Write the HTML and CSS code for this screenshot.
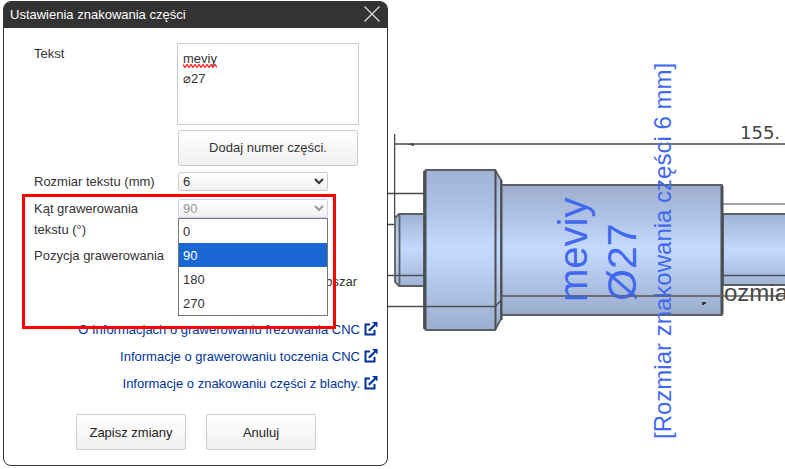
FILE: index.html
```html
<!DOCTYPE html>
<html lang="pl">
<head>
<meta charset="utf-8">
<title>Ustawienia znakowania części</title>
<link rel="stylesheet" href="styles.css">
</head>
<body>
<svg class="sprite" aria-hidden="true">
  <symbol id="external" viewBox="0 0 14 14">
    <path d="M6 2.500H1.500v10h9V8" fill="none" stroke="currentColor" stroke-width="2"/>
    <path d="M4.800 8.800 11 2.800" fill="none" stroke="currentColor" stroke-width="2.200"/>
    <path d="M8 0h5.500v5.500z" fill="currentColor"/>
  </symbol>
</svg>
<main class="workspace">
  <section class="dialog" role="dialog" aria-labelledby="dialog-title">
    <header class="dialog-header">
      <h1 class="dialog-title" id="dialog-title">Ustawienia znakowania części</h1>
      <button class="close" type="button" aria-label="Zamknij">
        <svg width="16" height="16" viewBox="0 0 16 16"><path d="M0.500 0.500l15 15M15.500 0.500l-15 15" stroke="#ddd" stroke-width="1.300"/></svg>
      </button>
    </header>
    <form class="form">
      <div class="row">
        <label class="label" for="text">Tekst</label>
        <div class="field text-field">
          <textarea class="textarea" id="text" spellcheck="false">meviy
⌀27</textarea>
          <svg class="squiggle" width="34" height="4" viewBox="0 0 34 4" aria-hidden="true"><path d="M0 .5l2 3 2-3 2 3 2-3 2 3 2-3 2 3 2-3 2 3 2-3 2 3 2-3 2 3 2-3 2 3 2-3 2 3" fill="none" stroke="#f22" stroke-width="1.300"/></svg>
          <button class="button add" type="button">Dodaj numer części.</button>
        </div>
      </div>
      <div class="row setting">
        <label class="label" for="size">Rozmiar tekstu (mm)</label>
        <div class="field"><select class="select" id="size"><option>6</option></select></div>
      </div>
      <div class="row setting">
        <label class="label" for="angle">Kąt grawerowania tekstu (°)</label>
        <div class="field">
          <select class="select open" id="angle"><option>90</option></select>
          <ul class="menu" role="listbox" aria-label="Kąt grawerowania">
            <li class="option" role="option">0</li>
            <li class="option selected" role="option" aria-selected="true">90</li>
            <li class="option" role="option">180</li>
            <li class="option" role="option">270</li>
          </ul>
        </div>
      </div>
      <div class="row setting position-row">
        <span class="label">Pozycja grawerowania</span>
        <div class="field area">obszar</div>
      </div>
      <nav class="links">
        <a class="link" href="#">O Informacjach o grawerowaniu frezowania CNC <svg class="icon"><use href="#external"/></svg></a>
        <a class="link" href="#">Informacje o grawerowaniu toczenia CNC <svg class="icon"><use href="#external"/></svg></a>
        <a class="link" href="#">Informacje o znakowaniu części z blachy. <svg class="icon"><use href="#external"/></svg></a>
      </nav>
      <div class="actions">
        <button class="button" type="button">Zapisz zmiany</button>
        <button class="button" type="button">Anuluj</button>
      </div>
    </form>
    <div class="highlight"></div>
  </section>
  <section class="viewport">
    <svg class="drawing" width="398" height="469" viewBox="388 0 398 469" role="img" aria-label="Rysunek wałka">
      <defs>
        <linearGradient id="metal" gradientUnits="userSpaceOnUse" x1="0" y1="170" x2="0" y2="330">
          <stop offset="0" stop-color="#a0b2d5"/><stop offset=".25" stop-color="#afc3e6"/>
          <stop offset=".48" stop-color="#c4d9fe"/><stop offset=".55" stop-color="#c1d6fb"/>
          <stop offset=".75" stop-color="#afc3e5"/><stop offset="1" stop-color="#9dafd1"/>
        </linearGradient>
        <linearGradient id="shaft" gradientUnits="userSpaceOnUse" x1="0" y1="185" x2="0" y2="315">
          <stop offset="0" stop-color="#9dadcd"/><stop offset=".25" stop-color="#afc3e6"/>
          <stop offset=".48" stop-color="#c4d9fe"/><stop offset=".55" stop-color="#c1d6fb"/>
          <stop offset=".75" stop-color="#afc3e5"/><stop offset="1" stop-color="#9aaccc"/>
        </linearGradient>
        <linearGradient id="journal" gradientUnits="userSpaceOnUse" x1="0" y1="214" x2="0" y2="286">
          <stop offset="0" stop-color="#a0b3d6"/><stop offset=".5" stop-color="#c4d9fe"/><stop offset="1" stop-color="#a0b3d6"/>
        </linearGradient>
      </defs>
      <g fill="none" stroke="#484848">
        <path d="M395.500 134v84" stroke="#ccc"/>
        <path d="M394.500 134v84"/>
        <path d="M395 144h391" stroke-width="1.600"/>
        <path d="M388 193.500h37M388 224.500h7" stroke-width="1.300"/>
        <path d="M723 204h63" stroke="#888" stroke-width="1.500"/>
      </g>
      <path d="M408 144.500l6-1.500v3z" fill="#444"/>
      <g stroke="#5c6064" stroke-width="1.800">
        <path d="M395 218l4-4h26v72h-26l-4-4z" fill="url(#journal)"/>
        <path d="M399.500 214v72" fill="none"/>
        <path d="M501 185h221v130H501z" fill="url(#shaft)"/>
        <path d="M723 214h64v71h-64z" fill="url(#journal)"/>
        <path d="M424 172l2-2h69l6 10v139l-6 11h-69l-2-2z" fill="url(#metal)"/>
      </g>
      <g fill="none" stroke="#4b4f52">
        <path d="M425 171v158M722 186v128" stroke-width="3"/>
        <path d="M495.500 170v160M501.500 180v140" stroke-width="2"/>
        <path d="M388 275.500h37M388 306.500h107l6-6M723 275.500h63" stroke-width="1.300"/>
      </g>
      <path d="M501 296h285" stroke="#606065" stroke-width="1.500"/>
      <path d="M702 302v3h2v-1h2v-2z" fill="#333"/>
      <g font-family="Liberation Sans, Arial, sans-serif">
        <text x="724" y="301" font-size="24" fill="#484848">ozmia</text>
        <text x="740" y="139" font-size="18" fill="#444" font-family="DejaVu Sans, sans-serif">155.</text>
        <g fill="#4169ef">
          <text transform="translate(587 302) rotate(-90)" font-size="40">meviy</text>
          <text transform="translate(636 301) rotate(-90)" font-size="41">Ø27</text>
          <text transform="translate(671 439) rotate(-90)" font-size="24">[Rozmiar znakowania części 6 mm]</text>
        </g>
      </g>
      <path d="M501 296h221" stroke="#606065"/>
    </svg>
  </section>
</main>
</body>
</html>
```
FILE: styles.css
```css
* { box-sizing: border-box; }

body {
  margin: 0;
  background: #fff;
  color: #333;
  font: 13px/21px "Liberation Sans", Arial, sans-serif;
  overflow: hidden;
}

.sprite { display: none; }

.workspace {
  display: flex;
  align-items: flex-start;
  padding-left: 3px;
}

.dialog {
  position: relative;
  flex: 0 0 385px;
  margin-top: 1px;
  border: 1px solid #333;
  border-radius: 8px;
  background: #fff;
}

.dialog-header {
  display: flex;
  align-items: center;
  justify-content: space-between;
  height: 26px;
  padding: 0 7px 2px 6px;
  border-radius: 6px 6px 0 0;
  background: #333;
}

.dialog-title {
  margin: 0;
  color: #fff;
  font-size: 13px;
  font-weight: 400;
}

.close {
  display: flex;
  padding: 0;
  border: 0;
  background: none;
}

.form {
  display: flex;
  flex-direction: column;
  gap: 6px;
  padding: 15px 9px 15px 30px;
}

.row { display: flex; }

.label {
  flex: 0 0 143px;
  padding-right: 10px;
}

.setting .label { margin-top: -1px; }

.field {
  position: relative;
  flex: 1;
  padding-left: 1px;
}

.text-field { padding-left: 0; }

.textarea {
  display: block;
  width: 182px;
  height: 82px;
  padding: 5px;
  border: 1px solid #ccc;
  color: #333;
  font: inherit;
  line-height: 20px;
  resize: none;
  overflow: hidden;
}

.squiggle {
  position: absolute;
  top: 21px;
  left: 6px;
}

.button {
  width: 110px;
  height: 36px;
  padding: 0;
  border: 1px solid #ccc;
  border-radius: 2px;
  background: linear-gradient(#fff, #f0f0f0);
  color: #222;
  font: inherit;
}

.add {
  display: block;
  width: 180px;
  margin: 5px 0 0 1px;
  padding-bottom: 2px;
  color: #333;
}

.select {
  display: block;
  width: 150px;
  height: 19px;
  padding: 0;
  border: 1px solid #ccc;
  border-radius: 2px;
  background: linear-gradient(#fff, #f0f0f0);
  color: #333;
  font: inherit;
}

.open {
  border-color: #ccd3f8;
  color: #999;
}

.menu {
  position: absolute;
  z-index: 1;
  top: 19px;
  left: 1px;
  width: 150px;
  margin: 0;
  padding: 0;
  border: 1px solid #767676;
  background: #fff;
  list-style: none;
}

.option {
  padding: 2px 0 0 4px;
  line-height: 22px;
}

.selected {
  background: #1967d2;
  color: #fff;
}

.setting .field { min-height: 21px; }

.position-row { min-height: 67px; }

.area {
  position: static;
  padding: 25px 21px 0 0;
  text-align: right;
}

.links {
  display: flex;
  flex-direction: column;
  align-items: flex-end;
  gap: 6px;
}

.link {
  display: flex;
  align-items: center;
  gap: 4px;
  color: #039;
  text-decoration: none;
}

.icon {
  width: 14px;
  height: 14px;
  margin-bottom: 2px;
}

.actions {
  display: flex;
  gap: 20px;
  padding: 14px 0 0 42px;
}

.highlight {
  position: absolute;
  top: 192px;
  left: 18px;
  z-index: 2;
  width: 314px;
  height: 135px;
  border: 3px solid #f00;
  pointer-events: none;
}

.viewport {
  flex: 1;
  min-width: 0;
  overflow: hidden;
}

.drawing { display: block; }
```
